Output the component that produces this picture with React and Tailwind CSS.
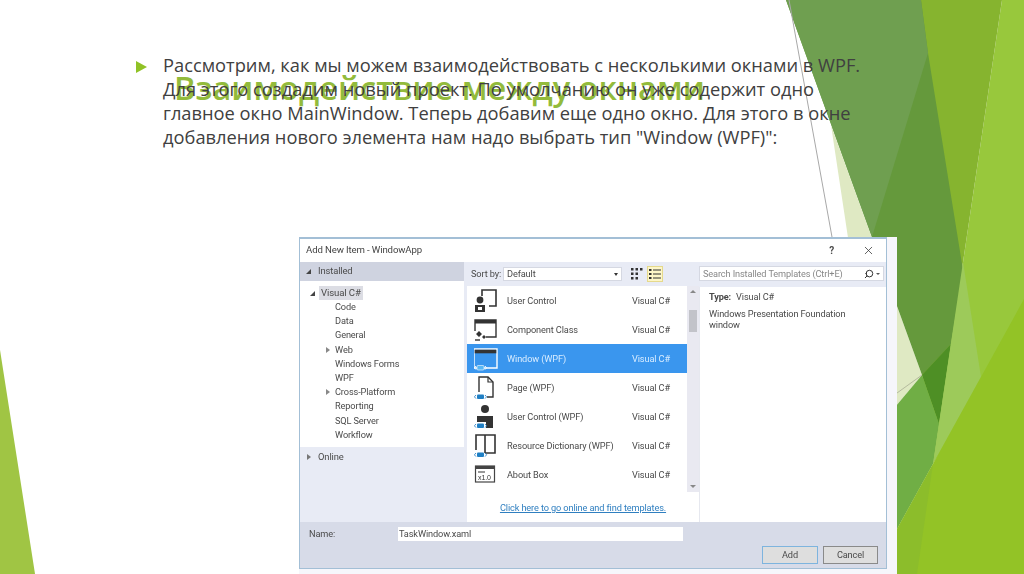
import { X, Search } from 'lucide-react';

const treeItems = [
  { label: 'Code' },
  { label: 'Data' },
  { label: 'General' },
  { label: 'Web', arrow: true },
  { label: 'Windows Forms' },
  { label: 'WPF' },
  { label: 'Cross-Platform', arrow: true },
  { label: 'Reporting' },
  { label: 'SQL Server' },
  { label: 'Workflow' },
];

// small blue "<=>" chip in the corner of the WPF icons
function Badge({ light }) {
  const edge = light ? '#ffffff' : '#2f83c5';
  return (
    <g>
      <rect x="3" y="19.5" width="7" height="4.5" rx="1" fill={light ? '#58b7f5' : '#1f7fc4'} stroke={light ? '#ffffff' : 'none'} strokeWidth="0.6" />
      <path d="M2 20l-1.6 1.8L2 23.6M11 20l1.6 1.8L11 23.6" fill="none" stroke={edge} strokeWidth="0.9" />
    </g>
  );
}

function UserControlIcon() {
  return (
    <svg width="26" height="26" viewBox="0 0 26 26">
      <path d="M8 8V2h14v16h-7" fill="none" stroke="#333" strokeWidth="1.6" />
      <circle cx="6" cy="12" r="3.4" fill="#333" />
      <rect x="1" y="17" width="10" height="7" fill="#333" />
      <rect x="4" y="19" width="4" height="3" fill="#fff" />
    </svg>
  );
}

function ComponentIcon() {
  return (
    <svg width="26" height="26" viewBox="0 0 26 26">
      <path d="M1 14V3h21v17H12" fill="none" stroke="#333" strokeWidth="1.4" />
      <rect x="1" y="3" width="21" height="3.5" fill="#333" />
      <path d="M5 14l3 3-3 3-3-3zM10 18l2 2-2 2-2-2z" fill="#333" />
      <path d="M1 23h5" stroke="#333" strokeWidth="1.4" />
    </svg>
  );
}

function WindowIcon() {
  return (
    <svg width="26" height="26" viewBox="0 0 26 26">
      <path d="M0 3h23v19H0z" fill="none" stroke="#fff" strokeWidth="1.4" />
      <rect x="0.7" y="3.7" width="21.6" height="3.6" fill="#333" />
      <Badge light />
    </svg>
  );
}

function PageIcon() {
  return (
    <svg width="26" height="26" viewBox="0 0 26 26">
      <path d="M5 17V2h9l5 5v15h-6" fill="none" stroke="#333" strokeWidth="1.4" />
      <path d="M14 2v5h5" fill="none" stroke="#333" strokeWidth="1.2" />
      <Badge />
    </svg>
  );
}

function UserWpfIcon() {
  return (
    <svg width="26" height="26" viewBox="0 0 26 26">
      <circle cx="11" cy="5" r="4" fill="#333" />
      <path d="M3 18v-6h16v12h-7v-6z" fill="#333" />
      <Badge />
    </svg>
  );
}

function BookIcon() {
  return (
    <svg width="26" height="26" viewBox="0 0 26 26">
      <path d="M2 17V2h9v18M11 2h10v18H11" fill="none" stroke="#333" strokeWidth="1.6" />
      <Badge />
    </svg>
  );
}

function AboutIcon() {
  return (
    <svg width="26" height="26" viewBox="0 0 26 26">
      <rect x="1.5" y="4" width="19" height="16" fill="#fff" stroke="#444" strokeWidth="1.2" />
      <rect x="1.5" y="4" width="19" height="3" fill="#444" />
      <rect x="4" y="9" width="7" height="2" fill="#999" />
      <text x="4" y="18" fontSize="7" fontFamily="Liberation Sans, sans-serif" fill="#333">x1.0</text>
    </svg>
  );
}

const templates = [
  { name: 'User Control', Icon: UserControlIcon },
  { name: 'Component Class', Icon: ComponentIcon },
  { name: 'Window (WPF)', Icon: WindowIcon, selected: true },
  { name: 'Page (WPF)', Icon: PageIcon },
  { name: 'User Control (WPF)', Icon: UserWpfIcon },
  { name: 'Resource Dictionary (WPF)', Icon: BookIcon },
  { name: 'About Box', Icon: AboutIcon },
];

function SlideBackground() {
  return (
    <svg className="absolute inset-0" width="1024" height="574" viewBox="0 0 1024 574">
      <polygon points="0,350 35,574 0,574" fill="#a0c544" />
      {/* right hand green planes */}
      <polygon points="1002,0 1024,0 1024,320 933,464" fill="#98c83c" />
      <polygon points="921,0 1002,0 933,464 922,375" fill="#86b42f" />
      <polygon points="831,125 922,375 880,425 880,450" fill="#dfe9c3" />
      <polygon points="786,0 921,0 928,53 963,270 951,344 922,375" fill="#65993c" />
      <polygon points="786,0 921,0 928,53 872,237" fill="#6f9f50" />
      <polygon points="951,344 922,375 939,424" fill="#4e8f25" />
      <polygon points="922,375 939,424 933,464 880,560 880,425" fill="#70ae45" />
      <polygon points="963,262 981,377 933,464" fill="#9dca5a" />
      <polygon points="1024,299 1024,574 880,574 880,560" fill="#93c326" />
      <polygon points="933,464 917,574 880,574 880,560" fill="#8cbd2b" />
      <line x1="789" y1="0" x2="832" y2="237" stroke="#a8a8a8" strokeWidth="1" />
      <line x1="897" y1="393" x2="922" y2="375" stroke="#b5bb9e" strokeWidth="1" />
    </svg>
  );
}

function Dialog() {
  return (
    <div className="absolute left-[299px] top-[237px] w-[598px] h-[337px] bg-[#f6f6fb] blur-[0.35px] font-['Roboto',sans-serif] text-[9.2px] tracking-[-0.12px] text-[#4a4a4a]">
      <div className="flex flex-col w-[588px] h-[332px] border border-t-2 border-[#a3bfd6] bg-white">
        <div className="flex items-center h-[23px] pl-[6px] shrink-0">
          <span className="text-[#444] text-[9.6px]">Add New Item - WindowApp</span>
          <span className="ml-auto mr-[28px] font-bold text-[10px]">?</span>
          <X size={13} strokeWidth={1.4} className="mr-[11px] text-[#333]" />
        </div>

        <div className="flex flex-1 bg-[#e8ebf5]">
          <div className="flex flex-col w-[164px] shrink-0">
            <div className="flex items-center h-[19px] bg-[#cfd3e0] pl-[6px] gap-[7px] text-[9.4px]">
              <span className="w-0 h-0 border-l-[5px] border-l-transparent border-b-[5px] border-b-[#444]" />
              Installed
            </div>
            <div className="bg-white h-[166px] pt-[5px]">
              <div className="flex items-center h-[14px] pl-[10px] gap-[4px]">
                <span className="w-0 h-0 border-l-[5px] border-l-transparent border-b-[5px] border-b-[#444]" />
                <span className="bg-[#dcdde4] px-[2px] text-[9.6px] leading-[14px]">Visual C#</span>
              </div>
              {treeItems.map((item) => (
                <div key={item.label} className="relative h-[14.2px] pl-[35px] leading-[14.2px]">
                  {item.arrow && (
                    <span className="absolute left-[26px] top-[4px] w-0 h-0 border-y-[3px] border-y-transparent border-l-[4px] border-l-[#888]" />
                  )}
                  {item.label}
                </div>
              ))}
            </div>
            <div className="flex items-center h-[20px] pl-[7px] gap-[7px] text-[9.4px]">
              <span className="w-0 h-0 border-y-[3px] border-y-transparent border-l-[4px] border-l-[#777]" />
              Online
            </div>
          </div>

          <div className="flex flex-col w-[235px] shrink-0 pl-[3px]">
            <div className="flex items-center h-[24px] pl-[4px] shrink-0">
              <span className="w-[32px] whitespace-nowrap">Sort by:</span>
              <div className="flex items-center justify-between w-[119px] h-[14px] bg-white border border-[#d5d8e2] pl-[3px] pr-[3px]">
                Default
                <span className="w-0 h-0 border-x-[2.5px] border-x-transparent border-t-[3px] border-t-[#333]" />
              </div>
              <svg width="12" height="12" viewBox="0 0 12 12" className="ml-[9px]" fill="#333">
                <rect x="0" y="0" width="2.5" height="2.5" />
                <rect x="4.5" y="0" width="2.5" height="2.5" />
                <rect x="9" y="0" width="2.5" height="2.5" />
                <rect x="0" y="4.5" width="2.5" height="2.5" />
                <rect x="4.5" y="4.5" width="2.5" height="2.5" />
                <rect x="0" y="9" width="2.5" height="2.5" />
                <rect x="4.5" y="9" width="2.5" height="2.5" />
              </svg>
              <div className="flex items-center justify-center ml-[4px] w-[16px] h-[16px] bg-[#fdf6c8] border border-[#e5d98c]">
                <svg width="12" height="12" viewBox="0 0 12 12" fill="#333">
                  <rect x="0" y="1" width="2.5" height="2" />
                  <rect x="4" y="1.5" width="8" height="1" />
                  <rect x="0" y="5" width="2.5" height="2" />
                  <rect x="4" y="5.5" width="8" height="1" />
                  <rect x="0" y="9" width="2.5" height="2" />
                  <rect x="4" y="9.5" width="8" height="1" />
                </svg>
              </div>
            </div>
            <div className="flex flex-col flex-1 bg-white">
              <div className="flex">
                <div className="flex-1">
                  {templates.map(({ name, Icon, selected }) => (
                    <div
                      key={name}
                      className={`flex items-center h-[29px] pl-[7px] ${selected ? 'bg-[#3a96ee] text-[#d8ecff]' : ''}`}
                    >
                      <Icon />
                      <span className="ml-[7px] w-[125px]">{name}</span>
                      <span>Visual C#</span>
                    </div>
                  ))}
                </div>
                <div className="relative w-[12px] h-[206px] bg-[#e9e9f1]">
                  <span className="absolute left-[3px] top-[4px] w-0 h-0 border-x-[3px] border-x-transparent border-b-[3px] border-b-[#888]" />
                  <div className="absolute left-[2px] top-[24px] w-[8px] h-[22px] bg-[#c2c3c9]" />
                  <span className="absolute left-[3px] bottom-[4px] w-0 h-0 border-x-[3px] border-x-transparent border-t-[3px] border-t-[#888]" />
                </div>
              </div>
              <div className="mt-[9px] text-center text-[#2f7fc0] underline">
                Click here to go online and find templates.
              </div>
            </div>
          </div>

          <div className="flex flex-col flex-1">
            <div className="flex items-center justify-between h-[15px] mt-[4px] mb-[6px] mr-[2px] bg-white border border-[#d5d8e2] pl-[3px] pr-[3px] text-[#888] shrink-0">
              Search Installed Templates (Ctrl+E)
              <span className="flex items-center gap-[2px] text-[#333]">
                <Search size={10} strokeWidth={2.4} className="-scale-x-100" />
                <span className="w-0 h-0 border-x-[2px] border-x-transparent border-t-[2.5px] border-t-[#555]" />
              </span>
            </div>
            <div className="flex-1 bg-white border-l border-[#e6e8ef] pl-[9px] pt-[4px] leading-[11px]">
              <div className="mb-[6px]">
                <span className="font-bold mr-[5px]">Type:</span>Visual C#
              </div>
              <div>
                Windows Presentation Foundation
                <br />
                window
              </div>
            </div>
          </div>
        </div>

        <div className="h-[46px] bg-[#d7dbe8] shrink-0">
          <div className="flex items-center h-[20px] pl-[9px] pt-[3px]">
            <span className="w-[89px]">Name:</span>
            <div className="w-[285px] h-[14px] bg-white pl-[1px] leading-[14px]">TaskWindow.xaml</div>
          </div>
          <div className="flex justify-end gap-[5px] pr-[8px] mt-[4px]">
            <div className="flex items-center justify-center w-[56px] h-[18px] bg-[#dedede] border border-[#7eb4de]">Add</div>
            <div className="flex items-center justify-center w-[55px] h-[18px] bg-[#dedede] border border-[#8a8a8a]">Cancel</div>
          </div>
        </div>
      </div>
    </div>
  );
}

export default function App() {
  return (
    <div className="relative w-[1024px] h-[574px] overflow-hidden bg-white">
      <SlideBackground />
      <h1 className="absolute left-[174px] top-[68px] font-['Open_Sans',sans-serif] font-semibold text-[32.6px] leading-[40px] text-[#93bb3c] whitespace-nowrap">
        Взаимодействие между окнами
      </h1>
      <span className="absolute left-[136px] top-[61px] w-0 h-0 border-y-[6px] border-y-transparent border-l-[11px] border-l-[#90c226]" />
      <p className="absolute left-[163px] top-[53px] w-[720px] font-['Open_Sans',sans-serif] text-[18.3px] leading-[24px] text-[#404040]">
        Рассмотрим, как мы можем взаимодействовать с несколькими окнами в WPF.
        <br />
        Для этого создадим новый проект. По умолчанию он уже содержит одно
        <br />
        главное окно MainWindow. Теперь добавим еще одно окно. Для этого в окне
        <br />
        добавления нового элемента нам надо выбрать тип "Window (WPF)":
      </p>
      <Dialog />
    </div>
  );
}
